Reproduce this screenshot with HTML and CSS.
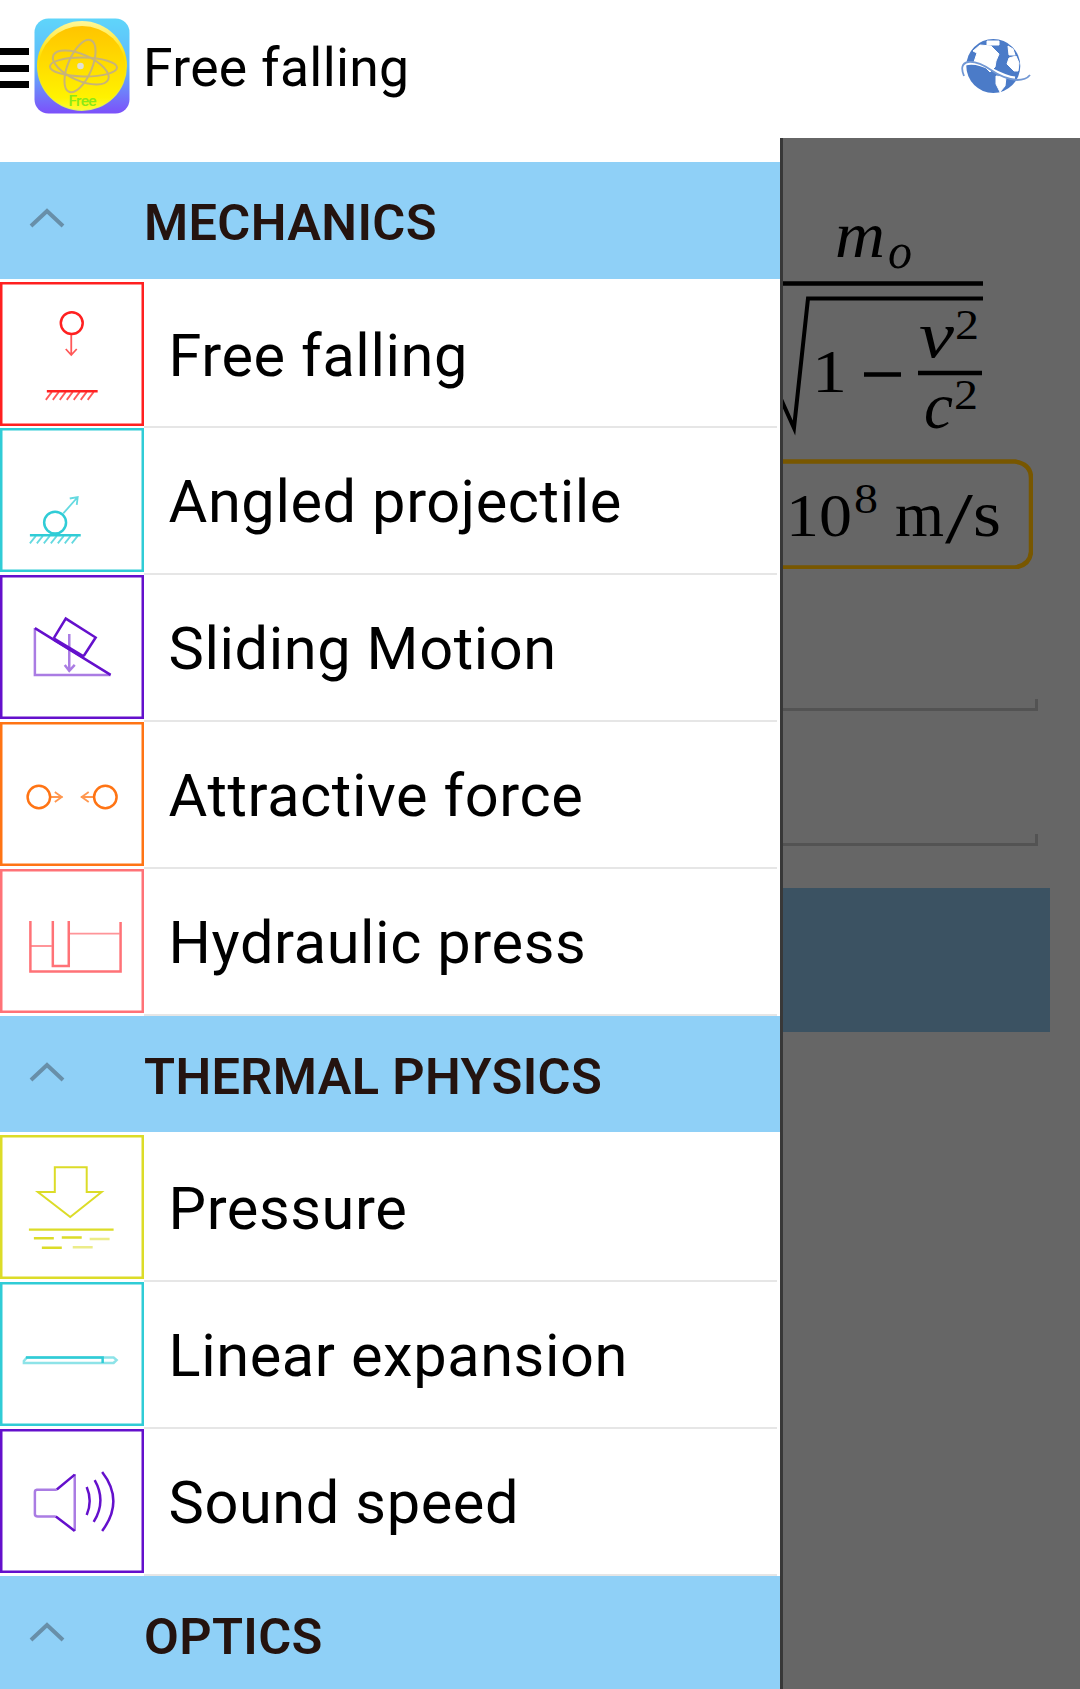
FILE: index.html
```html
<!DOCTYPE html>
<html lang="en">
<head>
<meta charset="utf-8">
<title>Free falling</title>
<link rel="stylesheet" href="styles.css">
</head>
<body>
<header class="bar">
  <div class="burger"><i></i><i></i><i></i></div>
  <svg class="logo" viewBox="0 0 96 96">
    <defs>
      <linearGradient id="sky" x1="0" y1="0" x2="0" y2="1"><stop offset="0" stop-color="#5fd5fa"/><stop offset=".5" stop-color="#5fb8fa"/><stop offset="1" stop-color="#7c50fa"/></linearGradient>
      <linearGradient id="sun" x1="0" y1="0" x2="0" y2="1"><stop offset="0" stop-color="#ffc400"/><stop offset=".45" stop-color="#ffdc00"/><stop offset=".85" stop-color="#fff200"/><stop offset="1" stop-color="#fffb30"/></linearGradient>
      <linearGradient id="rim" x1="0" y1="0" x2="0" y2="1"><stop offset="0" stop-color="#fff79a"/><stop offset=".4" stop-color="#ffe000"/><stop offset="1" stop-color="#d8f060"/></linearGradient>
    </defs>
    <rect x=".5" y=".5" width="95" height="95" rx="14" fill="url(#sky)"/>
    <circle cx="48" cy="48" r="45" fill="url(#rim)"/>
    <ellipse cx="48" cy="50" rx="43.500" ry="42" fill="url(#sun)"/>
    <g fill="none" stroke="#c8b478" stroke-width="2">
      <ellipse cx="46" cy="48" rx="12" ry="28" transform="rotate(23 46 48)"/>
      <ellipse cx="49.500" cy="49" rx="33.500" ry="9.5" transform="rotate(1 49 49)"/>
      <ellipse cx="47" cy="49.500" rx="30" ry="13" transform="rotate(24 47 49)"/>
    </g>
    <circle cx="46.500" cy="48" r="3.3" fill="#e0e0d4"/>
    <text x="34.500" y="88" textLength="28" font-size="15.500" class="free">Free</text>
  </svg>
  <h1 class="title">Free falling</h1>
  <svg class="globe" viewBox="0 0 72 60">
    <circle cx="33.3" cy="30" r="27" fill="#4b7bc8"/>
    <path d="M13 15L20 9L31 10L39 18L36 25L35 31L30 36L22 28L14 26L17 17ZM27 5h12v4H27ZM48 10L53 13L55 19L49 19ZM56 20L59 27L58 35L54 35L47 28L49 22ZM36 40L46 41L45 50L40 56L36 48Z" fill="#fff" stroke="#fff" stroke-linejoin="round"/>
    <path d="M5 28Q16 25 31 33T55 42" fill="none" stroke="#fff" stroke-width="3"/>
    <path d="M4 40Q-1 28 8 26Q18 25 31 34T57 44Q66 44 70 39" fill="none" stroke="#7298d4" stroke-width="1.8"/>
  </svg>
</header>
<div class="page">
  <nav class="drawer">
    <section>
      <h2 class="band"><svg class="chev" viewBox="0 0 36 20"><path d="M2 18L18 3L34 18"/></svg><span>MECHANICS</span></h2>
      <ul>
        <li class="red"><svg viewBox="0 0 144 144"><circle cx="72" cy="41" r="11"/><g class="thin"><path d="M71.5 52V73M66 67L71.5 73L77 67M52 110L46 118M59 110L53 118M66 110L60 118M73 110L67 118M80 110L74 118M87 110L81 118M94 110L88 118"/></g><path d="M47 109.5H98"/></svg><span>Free falling</span></li>
        <li class="teal"><svg viewBox="0 0 144 144"><circle cx="55.3" cy="94.7" r="11"/><path d="M30 107.3H81"/><g class="thin"><path d="M63.5 85.5L78 69M70 70.5L78 69L77 77M36 108L30 115.500M43 108L37 115.500M50 108L44 115.500M57 108L51 115.500M64 108L58 115.500M71 108L65 115.500M78 108L72 115.500"/></g></svg><span>Angled projectile</span></li>
        <li class="violet"><svg viewBox="0 0 144 144"><path d="M35 53L111 100M54 63L66 43.500L96 62.500L84 81"/><path d="M54 64L84 82" stroke-width="3.5"/><path class="soft" d="M35 53V100H111"/><path class="soft" d="M69.500 59V95M65 90L69.500 96L75 90"/></svg><span>Sliding Motion</span></li>
        <li class="orange"><svg viewBox="0 0 144 144"><circle cx="39" cy="75" r="11.3"/><circle cx="105.7" cy="75" r="11.3"/><g class="thin"><path d="M50 75H63M55 70L62 75L55 80M94 75H81M89 70L82 75L89 80"/></g></svg><span>Attractive force</span></li>
        <li class="pink"><svg viewBox="0 0 144 144"><path d="M30.500 52V102.500H121V53M53 52V97H69V52"/><g class="thin"><path d="M31 77H52M70 64.700H120"/></g></svg><span>Hydraulic press</span></li>
      </ul>
    </section>
    <section>
      <h2 class="band"><svg class="chev" viewBox="0 0 36 20"><path d="M2 18L18 3L34 18"/></svg><span>THERMAL PHYSICS</span></h2>
      <ul>
        <li class="yellow"><svg viewBox="0 0 144 144"><path stroke-width="2" d="M55 32H87V57H102L70.500 82L38 57H55Z"/><path d="M29 94.700H114M34 103.300H54M62 102.700H82M42 112.800H62"/><path class="soft" d="M90 104H110M73 112.300H93"/></svg><span>Pressure</span></li>
        <li class="teal"><svg viewBox="0 0 144 144"><path class="soft" d="M27 75.500H114L117 78L114 81H24V79Z"/><path d="M26 75.500H103V81"/></svg><span>Linear expansion</span></li>
        <li class="violet"><svg viewBox="0 0 144 144"><path class="soft" d="M57 60.700H37Q35 61 35 63V85Q35 87.500 38 87.500H56M75 45V102"/><path d="M57 60.500L75 45.500M56 87.500L75 102M87 58Q93 72 87 86M95 51Q107 72 94 93M102.500 43Q125 72 102.500 102"/></svg><span>Sound speed</span></li>
      </ul>
    </section>
    <section>
      <h2 class="band"><svg class="chev" viewBox="0 0 36 20"><path d="M2 18L18 3L34 18"/></svg><span>OPTICS</span></h2>
    </section>
  </nav>
  <main class="content">
    <svg class="formula" viewBox="0 0 240 310">
      <g class="it">
        <text x="55" y="119" font-size="66" textLength="50" lengthAdjust="spacingAndGlyphs">m</text>
        <text x="108" y="130" font-size="50" textLength="24" lengthAdjust="spacingAndGlyphs">o</text>
        <text x="139" y="219" font-size="66" textLength="35" lengthAdjust="spacingAndGlyphs">v</text>
        <text x="144" y="290" font-size="66" textLength="29" lengthAdjust="spacingAndGlyphs">c</text>
      </g>
      <text x="32" y="254" font-size="61" textLength="35" lengthAdjust="spacingAndGlyphs">1</text>
      <text x="175" y="201" font-size="43" textLength="24" lengthAdjust="spacingAndGlyphs">2</text>
      <text x="174" y="271" font-size="43" textLength="24" lengthAdjust="spacingAndGlyphs">2</text>
      <path d="M0 145.500H203M138 235H202M84 236.500H121" stroke-width="4.500"/>
      <path d="M0 259L14 290L28 160.500H203" stroke-width="4"/>
    </svg>
    <svg class="note" viewBox="0 0 253 110">
      <path d="M0 2.500H235Q251 5 251 19V93Q250 106 235 108.500H0"/>
      <text x="6" y="77" font-size="62" textLength="66" lengthAdjust="spacingAndGlyphs">10</text>
      <text x="74" y="54" font-size="43" textLength="24" lengthAdjust="spacingAndGlyphs">8</text>
      <text x="115" y="77" font-size="64" textLength="49" lengthAdjust="spacingAndGlyphs">m</text>
      <text x="165" y="83" font-size="72" textLength="28" lengthAdjust="spacingAndGlyphs">/</text>
      <text x="193" y="77" font-size="66" textLength="28" lengthAdjust="spacingAndGlyphs">s</text>
    </svg>
    <div class="field"></div>
    <div class="field second"></div>
    <div class="action"></div>
  </main>
</div>
</body>
</html>
```
FILE: styles.css
```css
* { box-sizing: border-box; }
body {
  margin: 0;
  height: 1689px;
  overflow: hidden;
  background: #fff;
  color: #000;
  font-family: Roboto, sans-serif;
}
h1, h2, ul { margin: 0; padding: 0; font-weight: 400; }
.bar { display: flex; height: 138px; }
.burger {
  display: flex;
  flex-direction: column;
  gap: 9.500px;
  width: 28.500px;
  padding-top: 48px;
}
.burger i { height: 7px; background: #000; }
.logo { width: 96px; height: 96px; margin: 18px 0 0 5.500px; }
.free { fill: #8be817; font-family: Roboto, sans-serif; font-weight: 500; }
.title {
  margin: 18px auto 0 13px;
  font-size: 53.500px;
  line-height: 100px;
  letter-spacing: .3px;
  white-space: nowrap;
}
.globe { width: 72px; height: 60px; margin: 36px 48.500px 0 0; }
.page {
  display: grid;
  grid-template-columns: 780px 300px;
  height: 1551px;
}
.drawer { padding-top: 24px; overflow: hidden; }
.band {
  display: flex;
  align-items: flex-start;
  height: 116.500px;
  margin-bottom: 3px;
  background: #8fd0f7;
  color: #24130f;
  font-size: 50.500px;
  font-weight: 600;
  line-height: 122px;
  letter-spacing: .35px;
  white-space: nowrap;
}
.chev {
  width: 36px;
  height: 20px;
  margin: 46px 79px 0 29px;
  fill: none;
  stroke: #688fa9;
  stroke-width: 4;
}
li {
  display: flex;
  height: 146.900px;
  font-size: 59.500px;
  line-height: 148px;
  letter-spacing: .6px;
  white-space: nowrap;
}
li svg {
  width: 143.500px;
  height: 144px;
  box-shadow: inset 0 0 0 2.500px currentColor;
  fill: none;
  stroke: currentColor;
  stroke-width: 2.500;
}
.thin { stroke-width: 1.800; opacity: .75; }
.soft { opacity: .55; }
li span {
  flex: 1;
  margin-right: 3px;
  padding-left: 25px;
  border-bottom: 2.500px solid #e6e6e6;
  color: #000;
}
.red { color: #ff2020; }
.teal { color: #30ccd6; }
.violet { color: #6410cc; }
.orange { color: #ff7414; }
.pink { color: #ff7277; }
.yellow { color: #dcdc28; }
.content {
  display: flex;
  flex-direction: column;
  background: #666;
  border-left: 3px solid #383838;
  overflow: hidden;
}
.formula, .note {
  flex: none;
  width: 240px;
  height: 310px;
  margin-left: -3px;
  fill: #000;
  font-family: "Liberation Serif", serif;
}
.formula path { fill: none; stroke: #000; }
.it { font-style: italic; }
.note {
  width: 253px;
  height: 110px;
  margin-top: 11px;
}
.note path { fill: none; stroke: #785700; stroke-width: 4.500; }
.field {
  flex: none;
  width: 255px;
  height: 12px;
  margin-top: 130px;
  border: solid #535353;
  border-width: 0 3px 3px 0;
}
.field.second { margin-top: 123px; }
.action {
  flex: none;
  width: 267px;
  height: 144px;
  margin-top: 42px;
  background: #3b5262;
}
```
